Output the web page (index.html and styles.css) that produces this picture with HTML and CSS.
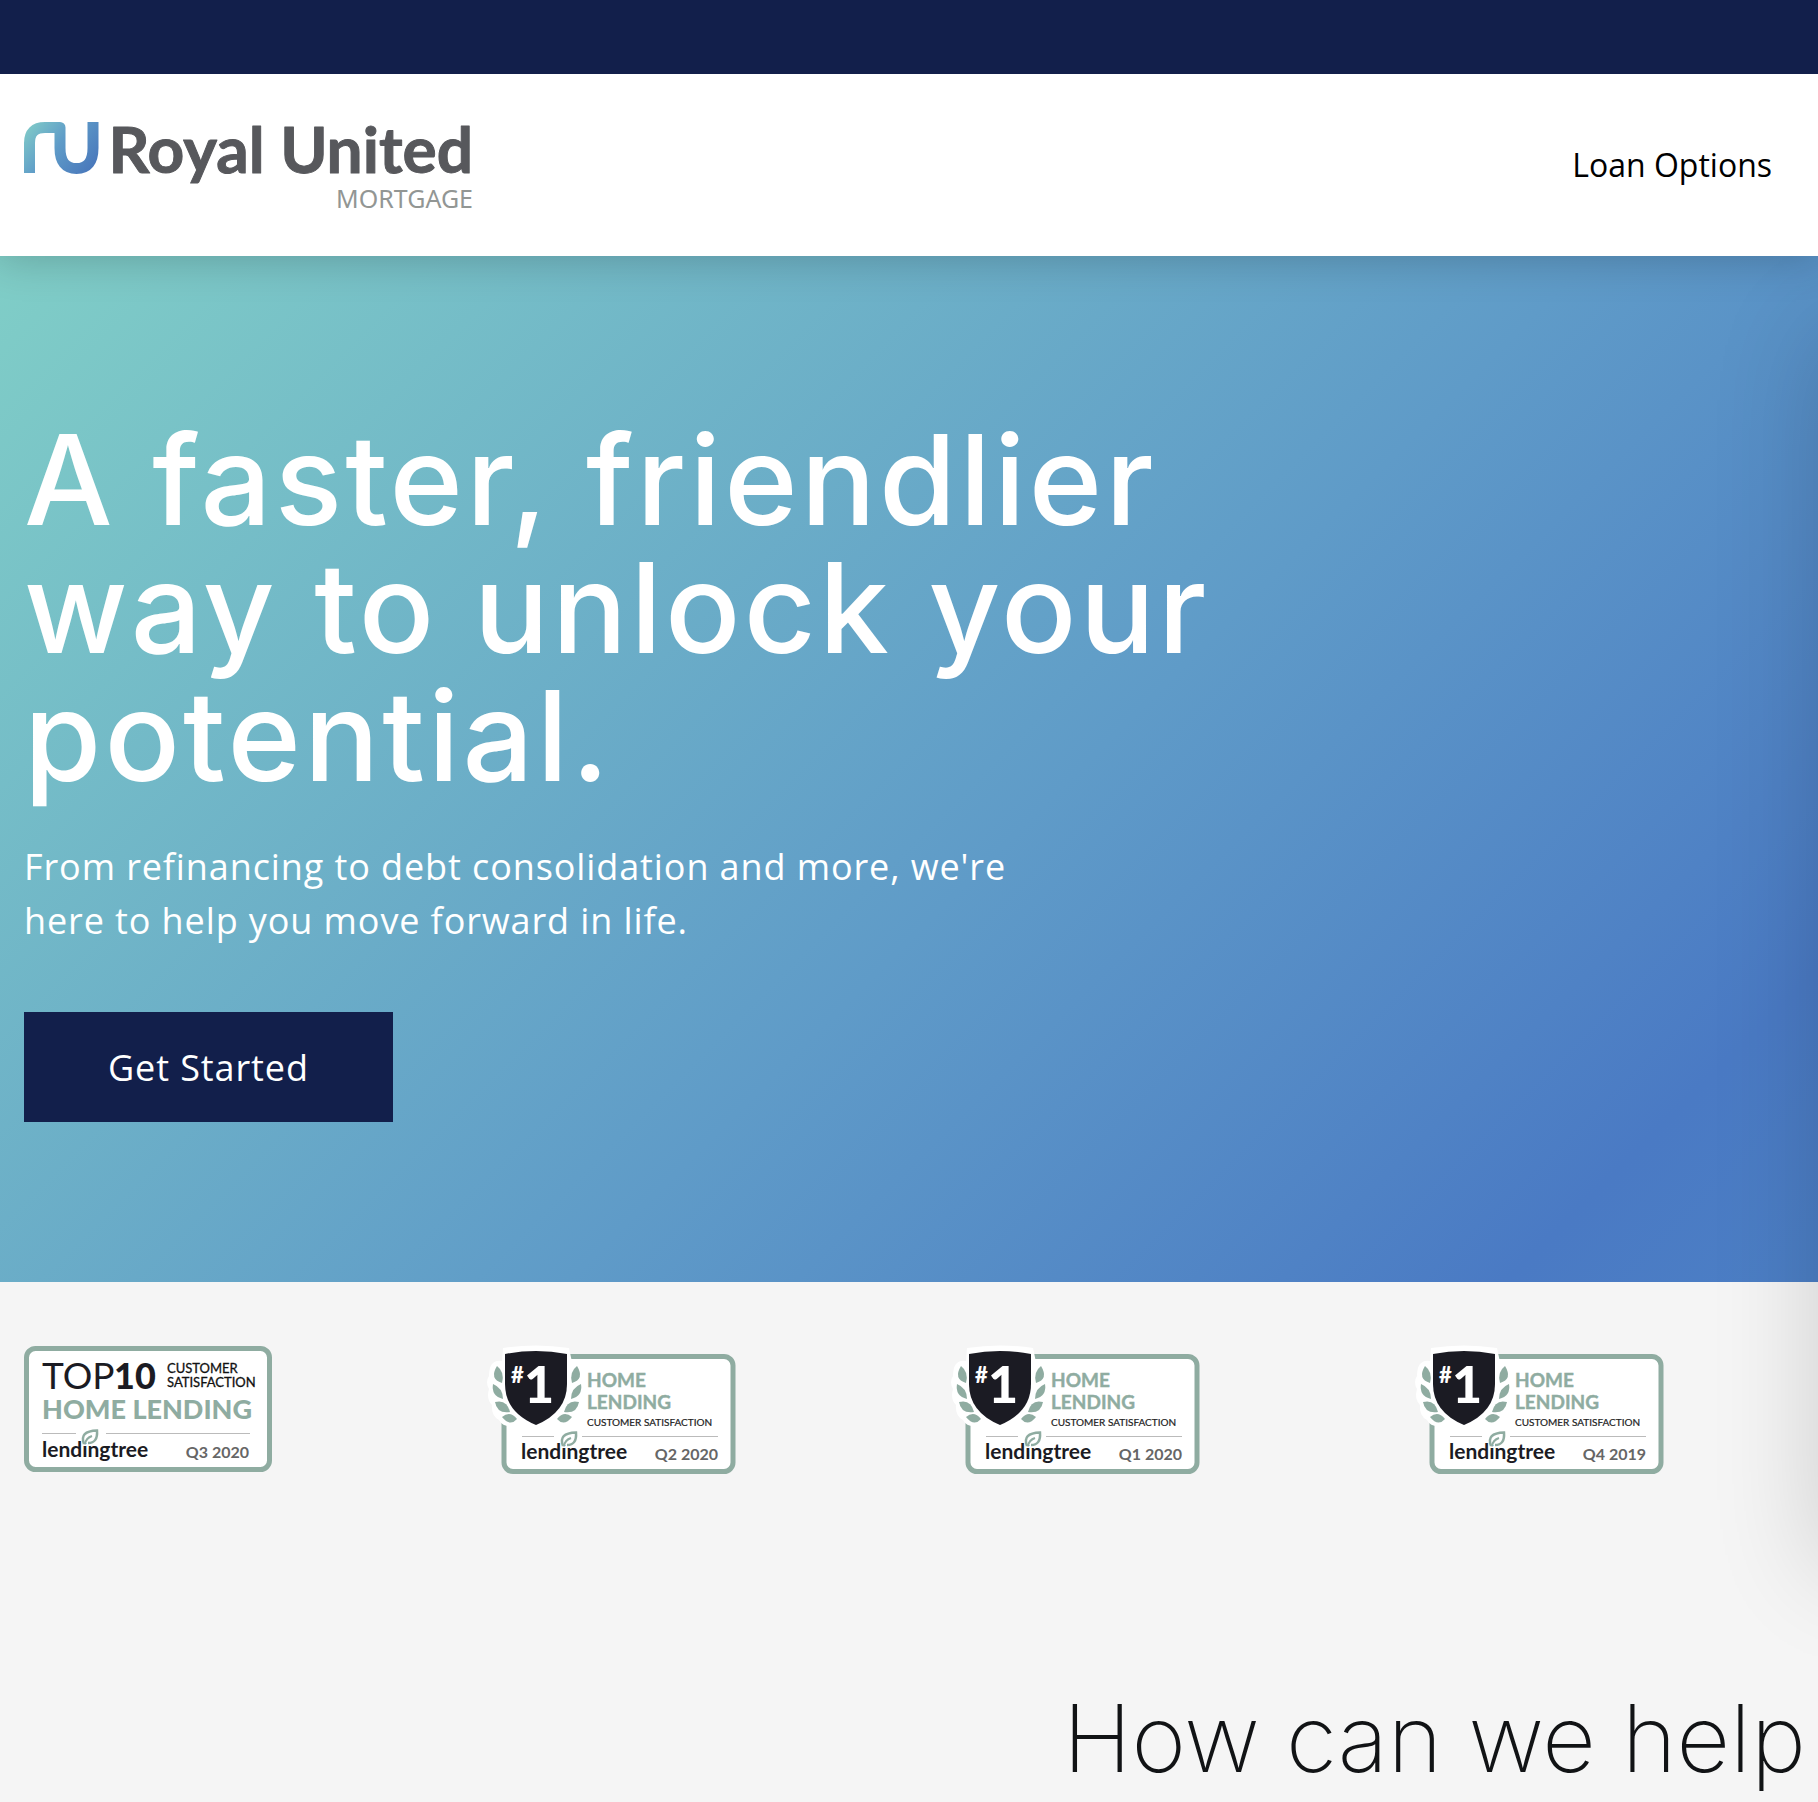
FILE: index.html
```html
<!DOCTYPE html>
<html lang="en">
<head>
<meta charset="utf-8">
<meta name="viewport" content="width=device-width, initial-scale=1">
<title>Royal United Mortgage</title>
<link rel="stylesheet" href="styles.css">
</head>
<body>
<svg class="defs" aria-hidden="true">
  <defs>
    <linearGradient id="ru" gradientUnits="userSpaceOnUse" x1="0" y1="0" x2="64" y2="52">
      <stop offset="0" stop-color="#84d0c8"/><stop offset=".5" stop-color="#5f9cc8"/><stop offset="1" stop-color="#4a79bc"/>
    </linearGradient>
    <g id="shield-badge">
      <rect x="16" y="10.500" width="229" height="115" rx="9" fill="#fff" stroke="#8faca1" stroke-width="5"/>
      <path d="M15 2Q48-3 81 2L84 16Q93 13 95 25Q99 33 97 39Q97 47 91 53Q94 65 89 74Q83 78 71 77L48 86L29 79Q16 83 11 74Q3 70 4 59Q-2 53 1 43Q-3 36 1 30Q1 13 14 15Z" fill="#fff"/>
      <path d="M17 8Q48 2 79 8V38Q79 66 48 79Q17 66 17 38Z" fill="#1b1b23"/>
      <g id="leaves" fill="#8faca1">
        <path d="M9 20Q17 26 14 37Q1 33 9 20Z"/><path d="M5 38Q15 42 15 53Q3 50 5 38Z"/>
        <path d="M7 56Q19 53 22 66Q9 68 7 56Z"/><path d="M14 71Q22 64 29 73Q22 81 14 71Z"/>
      </g>
      <use href="#leaves" transform="matrix(-1 0 0 1 98 0)"/>
      <g class="tree">
        <text x="23" y="37" font-size="22" font-weight="900" fill="#fff">#</text>
        <text x="36" y="57" font-size="52" font-weight="900" fill="#fff">1</text>
        <text x="99" y="41" font-size="19" font-weight="700" fill="#8faca1" stroke="#8faca1" stroke-width=".4">HOME</text>
        <text x="99" y="63" font-size="19" font-weight="700" fill="#8faca1" stroke="#8faca1" stroke-width=".4">LENDING</text>
        <text x="99" y="80" font-size="10" fill="#222" stroke="#222" stroke-width=".2">CUSTOMER SATISFACTION</text>
      </g>
      <path d="M34 90.500H66M94 90.500H230" stroke="#bbb" fill="none"/>
      <use href="#tree-logo" x="33" y="85"/>
    </g>
    <g id="tree-logo">
      <text class="tree" x="0" y="28" font-size="21" font-weight="700" fill="#1b1b23">lendingtree</text>
      <path d="M42 15Q37 2 55 1.500Q56 14 46 14" fill="#fff" stroke="#8faca1" stroke-width="2.500"/>
      <path d="M43 15Q44 9 50 7" fill="none" stroke="#8faca1" stroke-width="2"/>
    </g>
  </defs>
</svg>
<div class="topbar"></div>
<header class="header">
  <a class="logo" href="#" aria-label="Royal United Mortgage">
    <svg width="450" height="88" viewBox="0 0 450 88">
      <path d="M5.500 52V22Q5.500 6.500 21 6.500H36V27Q36 47.500 52.500 47.500Q69 47.500 69 27V1" fill="none" stroke="url(#ru)" stroke-width="11" stroke-linejoin="round"/>
      <text class="logo-name" x="449" y="52" text-anchor="end">Royal United</text>
      <text class="logo-sub" x="449" y="87" text-anchor="end">MORTGAGE</text>
    </svg>
  </a>
  <nav><a class="nav-link" href="#">Loan Options</a></nav>
</header>
<main>
  <section class="hero">
    <h1>A faster, friendlier<br>way to unlock your<br>potential.</h1>
    <p>From refinancing to debt consolidation and more, we're here to help you move forward in life.</p>
    <button class="cta" type="button">Get Started</button>
  </section>
  <section class="awards">
    <svg class="award" viewBox="0 0 266 128" role="img">
      <rect x="2.500" y="2.500" width="243" height="121" rx="9" fill="#fff" stroke="#8faca1" stroke-width="5"/>
      <g class="tree">
        <text x="18" y="43" font-size="37" font-weight="400" fill="#1b1b23">TOP</text>
        <text x="90" y="43" font-size="36" font-weight="900" fill="#1b1b23">10</text>
        <text x="143" y="27" font-size="13" fill="#111" stroke="#111" stroke-width=".3">CUSTOMER</text>
        <text x="143" y="41" font-size="13" fill="#111" stroke="#111" stroke-width=".3">SATISFACTION</text>
        <text x="18" y="73" font-size="27" font-weight="900" fill="#8faca1">HOME LENDING</text>
        <text x="225" y="112" text-anchor="end" font-size="16" font-weight="700" fill="#666">Q3 2020</text>
      </g>
      <path d="M18 87.500H52M82 87.500H226" stroke="#bbb" fill="none"/>
      <use href="#tree-logo" x="18" y="83"/>
    </svg>
    <svg class="award" viewBox="0 0 266 128" role="img"><use href="#shield-badge"/><text class="quarter" x="230" y="114">Q2 2020</text></svg>
    <svg class="award" viewBox="0 0 266 128" role="img"><use href="#shield-badge"/><text class="quarter" x="230" y="114">Q1 2020</text></svg>
    <svg class="award" viewBox="0 0 266 128" role="img"><use href="#shield-badge"/><text class="quarter" x="230" y="114">Q4 2019</text></svg>
  </section>
  <section class="help"><h2>How can we help</h2></section>
  <div class="drawer"></div>
</main>
</body>
</html>
```
FILE: styles.css
```css
* { box-sizing: border-box; }
body { margin: 0; background: #f5f5f5; color: #111315; font-family: "Open Sans", sans-serif; }
.defs { position: absolute; width: 0; height: 0; }
.topbar { position: relative; z-index: 3; height: 74px; background: #121f4b; }
.header {
  position: relative; z-index: 2; display: flex; align-items: center; justify-content: space-between;
  padding: 47px 46px 47px 24px; background: #fff; box-shadow: 0 0 40px 4px rgba(0, 0, 0, .2);
}
.logo svg { display: block; overflow: visible; }
.logo-name { font: 700 64px Lato, sans-serif; fill: #57585c; stroke: #57585c; stroke-width: 1px; stroke-linejoin: round; }
.logo-sub { font: 400 25px "Noto Sans", sans-serif; fill: #929694; }
.nav-link { color: #000; font-size: 32px; line-height: 46px; text-decoration: none; }
main { position: relative; overflow: hidden; }
.hero { padding: 160px 24px; background: linear-gradient(135deg, #80cec7 0%, #5f9bc8 56%, #4a7ac4 89%, #4c7fc5 100%); color: #fff; }
.hero h1 { margin: 0; font: 500 125px/128px Inter, sans-serif; letter-spacing: 0.025em; }
.hero p { max-width: 1040px; margin: 40px 0 64px; font-size: 36px; line-height: 54px; letter-spacing: 0.025em; }
.cta { height: 110px; padding: 0 84px; border: 0; background: #121f4b; color: #fff; font: 400 36px "Open Sans", sans-serif; letter-spacing: 0.025em; }
.awards { display: grid; grid-template-columns: repeat(4, 464px); padding: 64px 24px; }
.award { display: block; width: 266px; height: 128px; overflow: visible; }
.tree { font-family: Lato, sans-serif; }
.quarter { font: 700 16px Lato, sans-serif; fill: #666; text-anchor: end; }
.help { padding: 144px 12px 8px 24px; }
.help h2 { margin: 0; font: 200 93px/112px Inter, sans-serif; text-align: right; }
.drawer { position: absolute; top: 74px; left: 100%; width: 400px; height: 1240px; box-shadow: 0 0 100px rgba(0, 0, 0, .16); }
```
